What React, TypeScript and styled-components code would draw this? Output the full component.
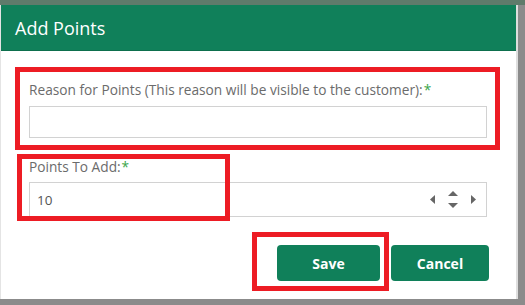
import React from "react";
import styled, { createGlobalStyle } from "styled-components";

const GlobalStyle = createGlobalStyle`
  html, body { margin: 0; padding: 0; }
  body {
    background: #8b8b8b;
    font-family: "Open Sans", "Noto Sans", sans-serif;
    width: 525px;
    height: 305px;
    overflow: hidden;
  }
`;

const Page = styled.div`
  position: relative;
  width: 525px;
  height: 305px;
  background: #8b8b8b;
  display: flex;
  flex-direction: column;
`;

const TopStrip = styled.div`
  height: 5px;
  background: #5f7b6b;
  flex: none;
`;

const Dialog = styled.div`
  width: 515px;
  height: 294px;
  background: #fff;
  border-left: 1px solid #e4e4e4;
  border-right: 2px solid #dedede;
  display: flex;
  flex-direction: column;
  box-sizing: content-box;
`;

const Header = styled.div`
  height: 46px;
  background: #10805a;
  border-bottom: 1px solid #0d6f4d;
  box-sizing: border-box;
  display: flex;
  align-items: center;
  padding-left: 14px;
  color: #fff;
  font-size: 18px;
`;

const Body = styled.div`
  display: flex;
  flex-direction: column;
  padding: 30px 29px 0 28px;
`;

const Field = styled.div<{ $gapTop?: number }>`
  display: flex;
  flex-direction: column;
  margin-top: ${(p) => p.$gapTop ?? 0}px;
`;

const Label = styled.label<{ $gap: number }>`
  font-size: 13.7px;
  line-height: 18px;
  color: #6b6b6b;
  margin-bottom: ${(p) => p.$gap}px;
  white-space: nowrap;
`;

const Required = styled.span`
  color: #3aa64a;
  margin-left: 1px;
`;

const TextBox = styled.div<{ $h: number }>`
  height: ${(p) => p.$h}px;
  border: 1px solid #d2d2d2;
  box-sizing: border-box;
  display: flex;
  align-items: center;
  padding: 0 7px;
  font-size: 13.5px;
  color: #555;
`;

const Value = styled.span`
  flex: 1;
`;

const Spinner = styled.div`
  display: flex;
  align-items: center;
  gap: 13px;
  margin-right: 3px;
`;

const ButtonRow = styled.div`
  display: flex;
  justify-content: flex-end;
  gap: 11px;
  margin-top: 28px;
  margin-right: -2px;
`;

const Button = styled.button<{ $w: number }>`
  width: ${(p) => p.$w}px;
  height: 36px;
  border: none;
  border-radius: 4px;
  background: #10805a;
  color: #fff;
  font-family: "Open Sans", sans-serif;
  font-weight: 700;
  font-size: 14px;
  padding: 0;
`;

const Highlight = styled.div<{ $x: number; $y: number; $w: number; $h: number }>`
  position: absolute;
  left: ${(p) => p.$x}px;
  top: ${(p) => p.$y}px;
  width: ${(p) => p.$w}px;
  height: ${(p) => p.$h}px;
  border: 5px solid #ed1c24;
  box-sizing: border-box;
  pointer-events: none;
`;

const Arrow = ({ d, w, h }: { d: string; w: number; h: number }) => (
  <svg width={w} height={h} viewBox={`0 0 ${w} ${h}`}>
    <path d={d} fill="#666" />
  </svg>
);

export default function App() {
  return (
    <Page>
      <GlobalStyle />
      <TopStrip />
      <Dialog>
        <Header>Add Points</Header>
        <Body>
          <Field>
            <Label $gap={7}>
              Reason for Points (This reason will be visible to the customer):<Required>*</Required>
            </Label>
            <TextBox $h={32} />
          </Field>
          <Field $gapTop={20}>
            <Label $gap={6}>
              Points To Add:<Required>*</Required>
            </Label>
            <TextBox $h={35}>
              <Value>10</Value>
              <Spinner>
                <Arrow w={5} h={9} d="M5 0 L0 4.5 L5 9 Z" />
                <svg width={10} height={19} viewBox="0 0 10 19">
                  <path d="M5 1 L10 6 L0 6 Z" fill="#666" />
                  <path d="M0 13 L10 13 L5 18 Z" fill="#666" />
                </svg>
                <Arrow w={5} h={9} d="M0 0 L5 4.5 L0 9 Z" />
              </Spinner>
            </TextBox>
          </Field>
          <ButtonRow>
            <Button $w={103}>Save</Button>
            <Button $w={98}>Cancel</Button>
          </ButtonRow>
        </Body>
      </Dialog>
      <Highlight $x={15} $y={67} $w={485} $h={83} />
      <Highlight $x={17} $y={154} $w={213} $h={67} />
      <Highlight $x={252} $y={232} $w={137} $h={59} />
    </Page>
  );
}
